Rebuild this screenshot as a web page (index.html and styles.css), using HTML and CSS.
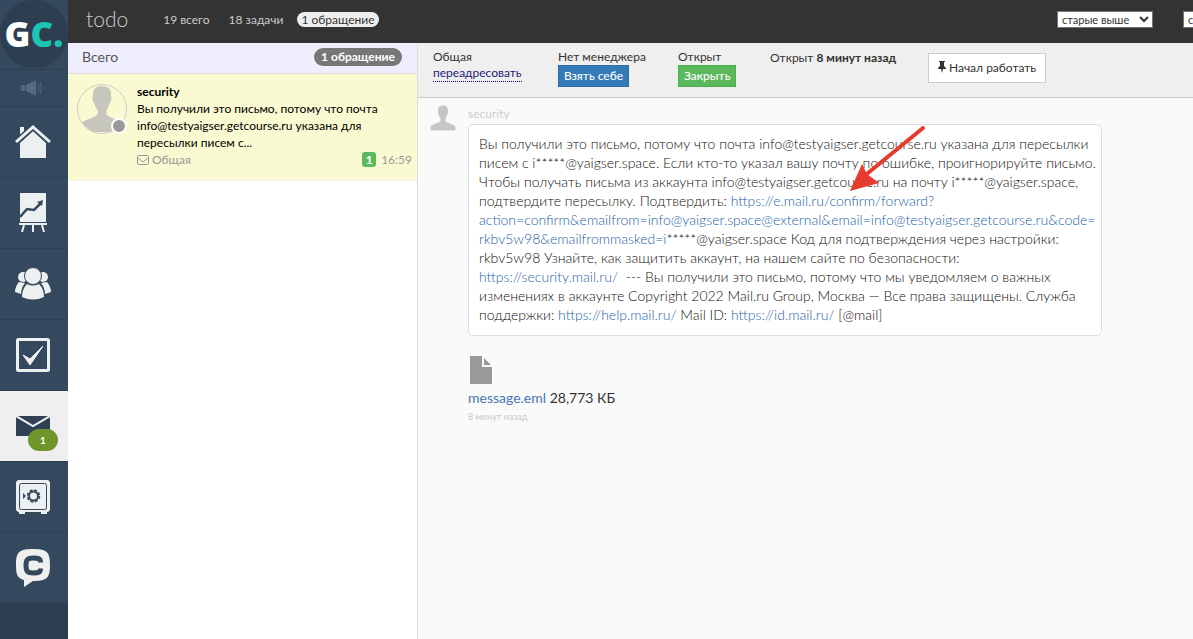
FILE: index.html
```html
<!DOCTYPE html>
<html lang="ru">
<head>
<meta charset="utf-8">
<title>todo</title>
<link rel="stylesheet" href="styles.css">
</head>
<body>
<svg width="0" height="0" class="defs" aria-hidden="true">
  <symbol id="person" viewBox="0 0 48 48">
    <path d="M24 1c-7 0-9.500 4-9 10-1 1-.5 6 1.500 7 .5 3 1.500 5 3 7v4c-1 4-13 5-18 10-1 2-1 6 1 8h43c2-2 2-6 1-8-5-5-17-6-18-10v-4c1.500-2 2.500-4 3-7 2-1 2.500-6 1.500-7C33.500 5 31 1 24 1z"/>
  </symbol>
</svg>
<div class="app">
  <nav class="side">
    <a class="logo" href="#" aria-label="GC"><span class="logo-disc"><span>G</span><span class="teal">C.</span></span></a>
    <a class="side-item small" href="#" aria-label="Новости">
      <svg width="22" height="16" viewBox="0 0 22 16" fill="#556b82"><path d="M0 5h4v6H0zM5 5l10-5v16L5 11z"/><path d="M17 4q2 4 0 8M19 2q3 6 0 12" fill="none" stroke="#556b82"/></svg>
    </a>
    <a class="side-item" href="#" aria-label="Главная">
      <svg width="36" height="34" viewBox="0 0 36 34"><path d="M5 2h4v5L5 11z" fill="#ecf0f1"/><path d="M5 18 18 6l13 12v15H5z" fill="#ecf0f1"/><path d="M1 17 18 2l17 15" fill="none" stroke="#34495e" stroke-width="6"/><path d="M1 17 18 2l17 15" fill="none" stroke="#ecf0f1" stroke-width="3"/></svg>
    </a>
    <a class="side-item" href="#" aria-label="Статистика">
      <svg width="28" height="40" viewBox="0 0 28 40"><path d="M1 0h26v29H1z" fill="#ecf0f1"/><path d="M1 24 8 16l7 1 7-7" fill="none" stroke="#34495e" stroke-width="2.500"/><path d="m18 9 6-2-1 6z" fill="#34495e"/><path d="M0 31h28M5 32l-2 7M14 32v7M23 32l2 7" fill="none" stroke="#ecf0f1" stroke-width="2"/></svg>
    </a>
    <a class="side-item" href="#" aria-label="Пользователи">
      <svg width="36" height="32" viewBox="0 0 36 32" fill="#ecf0f1"><circle cx="8" cy="9" r="5"/><circle cx="28" cy="9" r="5"/><path d="M4 14q-4 5-4 10l6 2q0-6 4-11zM32 14q4 5 4 10l-6 2q0-6-4-11z"/><circle cx="18" cy="8" r="8.500" stroke="#34495e"/><path d="M12 16q-5 5-5 13 11 5 22 0 0-8-5-13-6 3-12 0z"/></svg>
    </a>
    <a class="side-item" href="#" aria-label="Задачи">
      <svg width="34" height="34" viewBox="0 0 34 34"><rect x="1.500" y="1.500" width="31" height="31" rx="1" fill="none" stroke="#ecf0f1" stroke-width="3"/><path d="m7 17 7 4L27 8 14 27z" fill="#ecf0f1" stroke="#ecf0f1"/></svg>
    </a>
    <a class="side-item active" href="#" aria-label="Сообщения">
      <svg width="34" height="20" viewBox="0 0 34 20"><path d="M0 0h34v20H0z" fill="#2f4154"/><path d="m0 0 17 10L34 0" fill="none" stroke="#efefef" stroke-width="2"/></svg>
      <span class="count">1</span>
    </a>
    <a class="side-item" href="#" aria-label="Платежи">
      <svg width="34" height="34" viewBox="0 0 34 34"><path d="M2 0h30l2 2v28l-2 2h-1v2h-6v-2H9v2H3v-2H2l-2-2V2z" fill="#ecf0f1"/><rect x="3.500" y="3.500" width="27" height="26" rx="2" fill="none" stroke="#34495e"/><circle cx="17.500" cy="16" r="4.500" fill="none" stroke="#34495e" stroke-width="2"/><circle cx="17.500" cy="16" r="6" fill="none" stroke="#34495e" stroke-width="1.500" stroke-dasharray="3 1.700"/><path d="m7 13 3 3-3 3z" fill="#34495e"/></svg>
    </a>
    <a class="side-item" href="#" aria-label="Чат">
      <svg width="34" height="38" viewBox="0 0 34 38"><path d="M17 0c14 0 17 3 17 16s-3 16-17 16l-9 6V31C1 29 0 25 0 16 0 3 3 0 17 0z" fill="#efefef"/><path d="M24.500 13.500c0-4-2-4.500-7-4.500-6 0-7.500 1.500-7.500 7.500s1.500 7.500 7.500 7.500c5 0 7-.5 7-4.500" fill="none" stroke="#34495e" stroke-width="5"/></svg>
    </a>
  </nav>
  <div class="page">
    <header class="top">
      <h1>todo</h1>
      <a class="filter" href="#">19 всего</a>
      <a class="filter" href="#">18 задачи</a>
      <a class="filter on" href="#">1 обращение</a>
      <span class="grow"></span>
      <select class="sort" aria-label="Порядок"><option>старые выше</option></select>
      <select class="sort" aria-label="Фильтр"><option>с</option></select>
    </header>
    <div class="columns">
      <section class="list">
        <div class="list-head"><span>Всего</span><span class="pill">1 обращение</span></div>
        <article class="ticket">
          <div class="avatar"><svg width="48" height="48"><use href="#person"/></svg><i class="status"></i></div>
          <div class="ticket-body">
            <b>security</b>
            <p>Вы получили это письмо, потому что почта<br>info@testyaigser.getcourse.ru указана для<br>пересылки писем с...</p>
            <div class="meta">
              <svg width="12" height="10" viewBox="0 0 12 10" fill="none" stroke="#999"><rect x=".5" y=".5" width="11" height="9" rx="1"/><path d="m1 3 5 4 5-4"/></svg>
              <span>Общая</span><span class="grow"></span><span class="new">1</span><time>16:59</time>
            </div>
          </div>
        </article>
      </section>
      <main class="talk">
        <div class="bar">
          <div class="cell dept"><span>Общая</span><a class="forward" href="#">переадресовать</a></div>
          <div class="cell manager"><span>Нет менеджера</span><button class="btn blue">Взять себе</button></div>
          <div class="cell state"><span>Открыт</span><button class="btn green">Закрыть</button></div>
          <div class="opened">Открыт <b>8 минут назад</b></div>
          <button class="start"><svg width="8" height="12" viewBox="0 0 8 12" fill="#333"><path d="M1 0h6v1H6v4l2 2v1H5l-1 4-1-4H0V7l2-2V1H1z"/></svg>Начал работать</button>
        </div>
        <div class="thread">
          <svg class="face" width="26" height="26"><use href="#person"/></svg>
          <div class="post">
            <div class="author">security</div>
            <div class="message">Вы получили это письмо, потому что почта info@testyaigser.getcourse.ru указана для пересылки<br>писем с i*****@yaigser.space. Если кто-то указал вашу почту по ошибке, проигнорируйте письмо.<br>Чтобы получать письма из аккаунта info@testyaigser.getcourse.ru на почту i*****@yaigser.space,<br>подтвердите пересылку. Подтвердить: <a href="#">https://e.mail.ru/confirm/forward?<br>action=confirm&amp;emailfrom=info@yaigser.space@external&amp;email=info@testyaigser.getcourse.ru&amp;code=<br>rkbv5w98&amp;emailfrommasked=i</a>*****@yaigser.space Код для подтверждения через настройки:<br>rkbv5w98 Узнайте, как защитить аккаунт, на нашем сайте по безопасности:<br><a href="#">https://security.mail.ru/</a>&nbsp; --- Вы получили это письмо, потому что мы уведомляем о важных<br>изменениях в аккаунте Copyright 2022 Mail.ru Group, Москва — Все права защищены. Служба<br>поддержки: <a href="#">https://help.mail.ru/</a> Mail ID: <a href="#">https://id.mail.ru/</a> [@mail]
              <svg class="arrow" width="78" height="68" viewBox="0 0 78 68"><path d="M74 3 19 48" stroke="#e63b2e" stroke-width="4" stroke-linecap="round"/><path d="M1 66 13 39l5 10 12 9z" fill="#e63b2e"/></svg>
            </div>
            <svg class="file" width="22" height="28" viewBox="0 0 22 28" fill="#999"><path d="M0 0h12v11h10v17H0zM14 2l7 7h-7z"/></svg>
            <div class="attach"><a href="#">message.eml</a> 28,773 КБ</div>
            <time class="ago">8 минут назад</time>
          </div>
        </div>
      </main>
    </div>
  </div>
</div>
</body>
</html>
```
FILE: styles.css
```css
* { box-sizing: border-box; }
body { margin: 0; font: 12px/18px Lato, "Liberation Sans", sans-serif; color: #333; }
a { color: #4678b2; text-decoration: none; }
button, select { font: inherit; color: #333; }
h1, p { margin: 0; font-weight: 400; }
.defs { position: absolute; }
.app { display: flex; min-height: 100vh; overflow: hidden; }
.grow { flex: 1; }

.side { flex: none; width: 68px; background: #2c3e50; }
.logo { display: block; height: 69px; background: #34495e; }
.logo-disc { display: flex; align-items: center; justify-content: center; height: 68px; border-radius: 50%; background: #2c3e50; color: #fff; font: 800 35px/68px "Open Sans", sans-serif; }
.teal { color: #1cc4b4; }
.side-item { position: relative; display: flex; align-items: center; justify-content: center; height: 71px; padding-right: 2px; border-top: 1px solid #2c3e50; background: #34495e; }
.side-item.small { height: 37px; padding-right: 4px; }
.side-item.active { background: #efefef; }
.count { position: absolute; left: 28px; top: 38px; width: 30px; height: 22px; border-radius: 11px; background: #6f962b; color: #fff; font-size: 10px; font-weight: 700; line-height: 22px; text-align: center; }

.page { flex: 1; min-width: 0; display: flex; flex-direction: column; }
.top { display: flex; align-items: center; height: 43px; padding: 0 0 5px 18px; background: #333; color: #ccc; overflow: hidden; }
.top h1 { margin-right: 30px; font-size: 21px; font-weight: 300; }
.filter { margin-right: 9px; padding: 0 5px; border-radius: 8px; color: #ccc; line-height: 15px; }
.filter.on { padding: 0 4px; background: #eee; color: #333; }
.sort { flex: none; width: 96px; height: 17px; margin-right: 30px; padding: 0; border: 1px solid #767676; background: #fff; font-size: 11px; line-height: 15px; }
.sort + .sort { margin-right: -86px; }

.columns { flex: 1; display: flex; }
.list { flex: none; width: 350px; border-right: 1px solid #ddd; background: #fff; }
.list-head { display: flex; align-items: center; justify-content: space-between; height: 31px; padding: 0 15px 2px 14px; border-bottom: 1px solid #ddd; background: #eef; color: #555; font-size: 14px; }
.pill { padding: 0 7px; border-radius: 9px; background: #777; color: #fff; font-size: 12px; font-weight: 700; }
.ticket { display: flex; gap: 10px; padding: 9px 5px 12px 9px; border-bottom: 1px solid #eee; background: #f9f9d2; color: #000; line-height: 17px; }
.avatar { position: relative; flex: none; width: 50px; height: 50px; margin-top: 1px; border: 1px solid #ccc; border-radius: 50%; }
.avatar svg { display: block; border-radius: 50%; fill: #c6c6bc; }
.status { position: absolute; right: -1px; bottom: -1px; width: 16px; height: 16px; border: 2px solid #fff; border-radius: 50%; background: #999; }
.ticket-body { flex: 1; }
.meta { display: flex; align-items: center; gap: 3px; color: #999; }
.new { width: 14px; height: 15px; border-radius: 3px; background: #5cb85c; color: #fff; font-weight: 700; line-height: 15px; text-align: center; }
.meta time { margin-left: 2px; }

.talk { flex: 1; min-width: 0; background: #fafafa; }
.bar { display: flex; align-items: flex-start; height: 55px; padding: 5px 15px; border-bottom: 1px solid #ccc; background: #efefef; line-height: 17px; }
.cell { display: flex; flex-direction: column; align-items: flex-start; }
.dept { width: 125px; }
.manager { width: 120px; }
.state { width: 92px; }
.forward { border-bottom: 1px dotted #008; color: #1c1c78; line-height: 16px; }
.btn { height: 22px; padding: 0 5px; border: 1px solid; color: #fff; line-height: 18px; font-weight: 500; }
.blue { border-color: #2e6da4; background: #337ab7; }
.green { border-color: #4cae4c; background: #5cb85c; }
.opened { width: 158px; padding-top: 1px; }
.start { display: flex; align-items: center; justify-content: center; gap: 3px; width: 118px; height: 30px; margin-top: 5px; padding: 0 0 2px; border: 1px solid #ccc; background: #fff; }
.thread { display: flex; gap: 12px; padding: 7px 15px 0 12px; }
.face { flex: none; fill: #c6c6c6; }
.post { flex: 1; max-width: 634px; }
.author { color: #ccc; line-height: 18px; margin-bottom: 1px; }
.message { position: relative; padding: 9px 10px 11px; border: 1px solid #ddd; border-radius: 5px; background: #fff; color: #111; font-size: 14px; font-weight: 300; line-height: 19px; white-space: nowrap; }
.message a { color: #2563a8; }
.arrow { position: absolute; left: 380px; top: 0; fill: none; }
.file { display: block; margin: 20px 0 4px 2px; }
.attach { font-size: 14px; line-height: 19px; }
.ago { display: block; color: #ccc; font-size: 9px; font-weight: 500; line-height: 20px; }
```
